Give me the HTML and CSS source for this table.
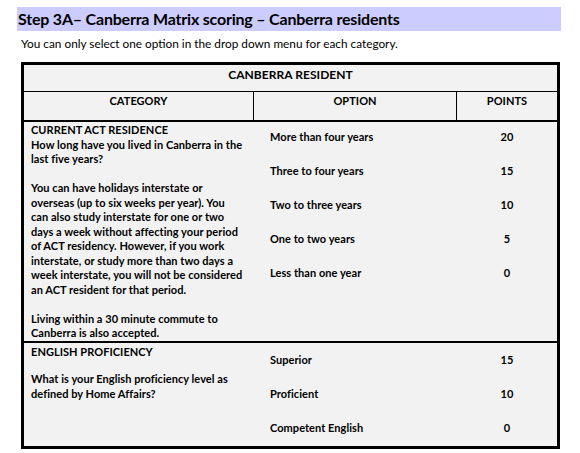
FILE: index.html
```html
<!DOCTYPE html>
<html lang="en">
<head>
<meta charset="utf-8">
<title>Step 3A – Canberra Matrix scoring</title>
<link rel="stylesheet" href="styles.css">
</head>
<body>
<div class="page">
  <h1 class="title">Step 3A– Canberra Matrix scoring – Canberra residents</h1>
  <p class="intro">You can only select one option in the drop down menu for each category.</p>
  <div class="matrix">
    <div class="caption">CANBERRA RESIDENT</div>
    <div class="heads">
      <div class="head">CATEGORY</div>
      <div class="head head-mid">OPTION</div>
      <div class="head">POINTS</div>
    </div>
    <div class="row row-first">
      <div class="cat">
        <div>CURRENT ACT RESIDENCE</div>
        <div>How long have you lived in Canberra in the<br>last five years?</div>
        <div class="gap">You can have holidays interstate or<br>overseas (up to six weeks per year). You<br>can also study interstate for one or two<br>days a week without affecting your period<br>of ACT residency. However, if you work<br>interstate, or study more than two days a<br>week interstate, you will not be considered<br>an ACT resident for that period.</div>
        <div class="gap">Living within a 30 minute commute to<br>Canberra is also accepted.</div>
      </div>
      <div class="choices choices-first">
        <div class="opt">More than four years</div><div class="pts">20</div>
        <div class="opt">Three to four years</div><div class="pts">15</div>
        <div class="opt">Two to three years</div><div class="pts">10</div>
        <div class="opt">One to two years</div><div class="pts">5</div>
        <div class="opt">Less than one year</div><div class="pts">0</div>
      </div>
    </div>
    <div class="row row-second">
      <div class="cat cat-second">
        <div>ENGLISH PROFICIENCY</div>
        <div class="q">What is your English proficiency level as<br>defined by Home Affairs?</div>
      </div>
      <div class="choices choices-second">
        <div class="opt">Superior</div><div class="pts">15</div>
        <div class="opt">Proficient</div><div class="pts">10</div>
        <div class="opt">Competent English</div><div class="pts">0</div>
      </div>
    </div>
  </div>
</div>
</body>
</html>
```
FILE: styles.css
```css
* { box-sizing: border-box; }
html, body { margin: 0; padding: 0; background: #fff; }
body {
  font-family: Lato, "Open Sans", "Liberation Sans", sans-serif;
  color: #000;
}
.page { padding: 7px 19px 0 17px; width: 580px; }
.title {
  margin: 0;
  width: 544px;
  height: 24px;
  background: #ccccff;
  font-size: 16px;
  font-weight: 700;
  line-height: 24px;
  padding-left: 1px;
  letter-spacing: -0.2px;
  color: #000;
}
.intro {
  margin: 6px 0 0 4px;
  font-size: 11.8px;
  line-height: 14px;
  letter-spacing: 0;
  color: #000;
}
.matrix {
  margin: 11px 0 0 4px;
  width: 539px;
  border: 3px solid #000;
  background: #f2f2f2;
  font-size: 11px;
  font-weight: 700;
  letter-spacing: 0.05px;
  color: #000;
}
.caption {
  height: 27px;
  text-align: center;
  font-size: 12px;
  line-height: 16px;
  padding-top: 2px;
  border-bottom: 1px solid #000;
}
.heads {
  display: grid;
  grid-template-columns: 229px 204px 1fr;
  height: 28px;
}
.head {
  text-align: center;
  padding-top: 2px;
  line-height: 14px;
}
.head-mid {
  border-left: 1px solid #000;
  border-right: 1px solid #000;
}
.row {
  display: grid;
  grid-template-columns: 229px 1fr;
  border-top: 2px solid #000;
}
.row-first { height: 221px; }
.row-second { height: 105px; }
.cat {
  padding: 1px 0 0 7px;
  line-height: 14.5px;
}
.cat .gap { margin-top: 14.5px; }
.cat-second { padding-top: 2px; }
.cat-second .q { margin-top: 11px; line-height: 15.5px; }
.choices {
  display: grid;
  grid-template-columns: 204px 1fr;
  grid-auto-rows: 34px;
  align-items: start;
  line-height: 14px;
}
.choices-first { padding-top: 8px; }
.choices-second { padding-top: 10px; }
.opt { padding-left: 17px; }
.pts { text-align: center; }
```
